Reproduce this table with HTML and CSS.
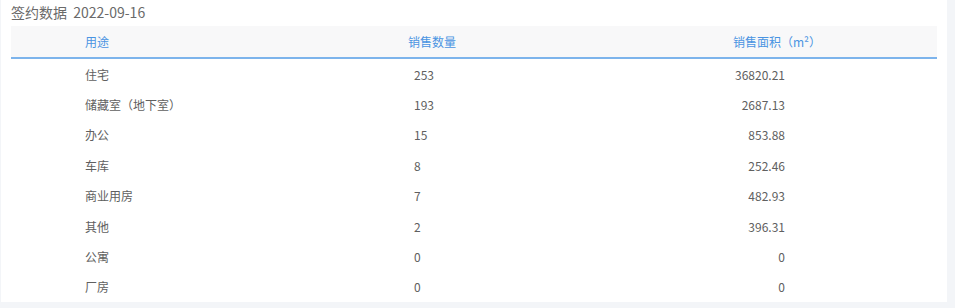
FILE: index.html
```html
<!DOCTYPE html>
<html lang="zh">
<head>
<meta charset="utf-8">
<link rel="stylesheet" href="styles.css">
</head>
<body>
<div class="card">
  <div class="title">签约数据&nbsp;&nbsp;2022-09-16</div>
  <div class="table">
    <div class="row head">
      <div class="c1">用途</div>
      <div class="c2">销售数量</div>
      <div class="c3">销售面积（m²）</div>
    </div>
    <div class="row"><div class="c1">住宅</div><div class="c2">253</div><div class="c3">36820.21</div></div>
    <div class="row"><div class="c1">储藏室（地下室）</div><div class="c2">193</div><div class="c3">2687.13</div></div>
    <div class="row"><div class="c1">办公</div><div class="c2">15</div><div class="c3">853.88</div></div>
    <div class="row"><div class="c1">车库</div><div class="c2">8</div><div class="c3">252.46</div></div>
    <div class="row"><div class="c1">商业用房</div><div class="c2">7</div><div class="c3">482.93</div></div>
    <div class="row"><div class="c1">其他</div><div class="c2">2</div><div class="c3">396.31</div></div>
    <div class="row"><div class="c1">公寓</div><div class="c2">0</div><div class="c3">0</div></div>
    <div class="row"><div class="c1">厂房</div><div class="c2">0</div><div class="c3">0</div></div>
  </div>
</div>
</body>
</html>
```
FILE: styles.css
```css
html, body {
  margin: 0;
  padding: 0;
}
body {
  background: #f3f5f8;
  font-family: "Noto Sans CJK SC", "Noto Sans", sans-serif;
  width: 955px;
  height: 308px;
  overflow: hidden;
}
.card {
  margin-left: 1px;
  width: 926px;
  height: 302px;
  padding: 0 10px;
  background: #ffffff;
}
.title {
  height: 26px;
  line-height: 25px;
  font-size: 14px;
  color: #6a6a6a;
}
.table {
  display: flex;
  flex-direction: column;
}
.row {
  display: grid;
  grid-template-columns: 309px 308px 309px;
  height: 30.4px;
  align-items: center;
  font-size: 12px;
  color: #606060;
}
.row.head {
  height: 31px;
  background: #f8f8f9;
  border-bottom: 2px solid #7db4ec;
  color: #4a94e2;
}
.c1 {
  padding-left: 74px;
}
.c2 {
  padding-left: 94px;
}
.head .c2 {
  padding-left: 88px;
}
.c3 {
  text-align: right;
  padding-right: 152px;
}
.head .c3 {
  text-align: left;
  padding-left: 105px;
  padding-right: 0;
}
```
